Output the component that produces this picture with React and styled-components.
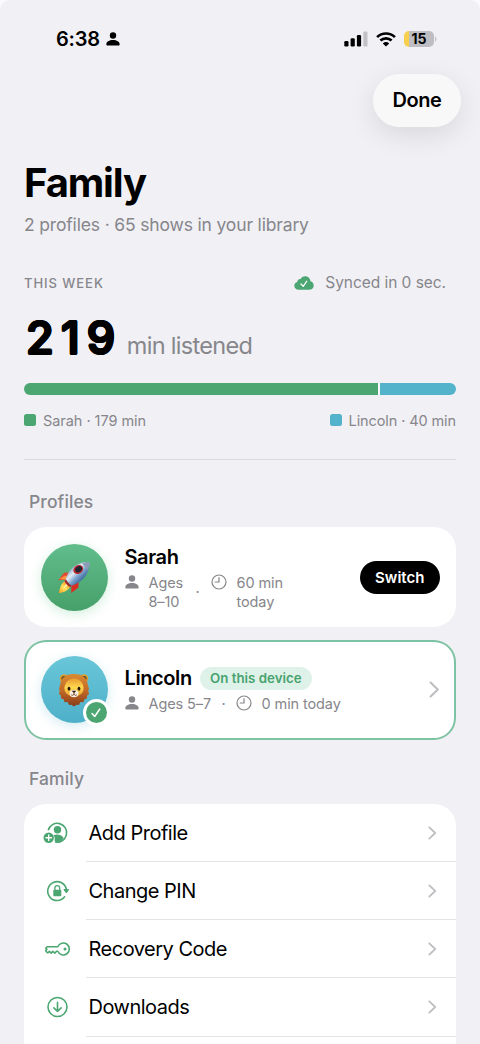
import React from "react";
import styled, { createGlobalStyle } from "styled-components";

const GREEN = "#4ba671";
const BLUE = "#53b3cb";
const GRAY = "#86868b";

const Global = createGlobalStyle`
  * { box-sizing: border-box; }
  html, body { margin: 0; height: 1044px; overflow: hidden; background: #fafafc; }
  body { font-family: Inter, "Liberation Sans", sans-serif; color: #000; }
  svg { display: block; flex: none; }
`;

const Screen = styled.main`
  width: 480px;
  height: 1044px;
  overflow: hidden;
  display: flex;
  flex-direction: column;
  background: #f1f0f5;
  border-radius: 10px 10px 0 0;
`;

const Label = styled.span`
  font-size: ${(p) => p.$size}px;
  line-height: ${(p) => p.$line}px;
  font-weight: ${(p) => p.$weight || 400};
  letter-spacing: ${(p) => p.$track || 0}px;
  color: ${(p) => p.$color || "#000"};
  white-space: nowrap;
`;

const StatusBar = styled.header`
  flex: none;
  height: 74px;
  padding: 4px 42px 0 56px;
  display: flex;
  align-items: center;
  justify-content: space-between;
`;

const Group = styled.div`
  display: flex;
  align-items: center;
  gap: ${(p) => p.$gap}px;
`;

const Battery = styled.div`
  width: 30px;
  height: 16px;
  border-radius: 5px;
  display: flex;
  align-items: center;
  justify-content: center;
  background: linear-gradient(90deg, #f8d04e 5px, #bebdc2 5px);
`;

const Toolbar = styled.div`
  flex: none;
  display: flex;
  justify-content: flex-end;
  height: 53px;
  padding-right: 19px;
`;

const DoneButton = styled.button`
  width: 88px;
  height: 53px;
  padding: 0;
  border: 0;
  border-radius: 27px;
  background: #f8f8f9;
  color: #000;
  font: 600 20px/53px Inter, sans-serif;
  letter-spacing: -0.4px;
  box-shadow: 0 8px 28px rgba(0, 0, 0, 0.1);
`;

const Content = styled.div`
  flex: none;
  padding: 0 24px;
  display: flex;
  flex-direction: column;
`;

const Title = styled.h1`
  margin: 31px 0 0;
  font-size: 40px;
  line-height: 50px;
  font-weight: 700;
  letter-spacing: -1.15px;
`;

const Row = styled.div`
  display: flex;
  align-items: center;
  justify-content: space-between;
  margin-top: ${(p) => p.$top || 0}px;
  padding-right: ${(p) => p.$end || 0}px;
`;

const Total = styled.div`
  display: flex;
  align-items: baseline;
  gap: 4.5px;
  height: 59px;
  margin-top: 14px;
`;

/* The ring of shadows thickens the strokes and rounds their ends. */
const RoundedNumber = styled.span`
  padding-left: 2px;
  font-size: 45px;
  line-height: 57px;
  font-weight: 500;
  letter-spacing: 7.2px;
  text-shadow: 1.2px 0 #000, -1.2px 0 #000, 0 1.2px #000, 0 -1.2px #000,
    0.85px 0.85px #000, -0.85px 0.85px #000, 0.85px -0.85px #000, -0.85px -0.85px #000;
`;

const Bar = styled.div`
  display: flex;
  gap: 2px;
  height: 12px;
  margin-top: 14.5px;
  border-radius: 6px;
  overflow: hidden;
  background: #fafafc;
`;

const Segment = styled.div`
  flex: ${(p) => p.$share} 0 0;
  background: ${(p) => p.$color};
`;

const Swatch = styled.i`
  width: 12px;
  height: 12px;
  border-radius: 2.5px;
  background: ${(p) => p.$color};
`;

const Divider = styled.hr`
  width: 100%;
  height: 1px;
  margin: 29.5px 0 0;
  border: 0;
  background: #d9d8dd;
`;

const SectionTitle = styled.h2`
  margin: ${(p) => p.$top}px 0 0 5px;
  font-size: 17.5px;
  line-height: 24px;
  font-weight: 500;
  letter-spacing: 0.12px;
  color: ${GRAY};
`;

const ProfileCard = styled.article`
  height: 100px;
  margin-top: ${(p) => p.$top}px;
  padding: 0 16px 0 16.5px;
  border-radius: 22px;
  display: flex;
  align-items: center;
  background: #fff;
  box-shadow: ${(p) => (p.$active ? "inset 0 0 0 2px #7ec2a4" : "none")};
`;

const Avatar = styled.div`
  position: relative;
  flex: none;
  width: 67px;
  height: 67px;
  margin-right: 17px;
  border-radius: 50%;
  display: grid;
  place-items: center;
  background: ${(p) => (p.$blue ? "linear-gradient(#69c6d8, #4eb0c9)" : "linear-gradient(#62bd8d, #45a069)")};
  box-shadow: 0 3px 12px ${(p) => (p.$blue ? "rgba(83,179,203,.25)" : "rgba(75,190,120,.25)")};
`;

const CheckBadge = styled.div`
  position: absolute;
  right: -2px;
  bottom: -3px;
  width: 27px;
  height: 27px;
  border: 3.5px solid #fff;
  border-radius: 50%;
  display: grid;
  place-items: center;
  background: ${GREEN};
`;

const Details = styled.div`
  flex: 1;
  display: flex;
  flex-direction: column;
`;

const Meta = styled.div`
  display: flex;
  align-items: flex-start;
  font-size: 14.5px;
  line-height: 19px;
  letter-spacing: -0.1px;
  color: ${GRAY};
  margin-top: ${(p) => p.$top}px;
`;

const Slot = styled.span`
  width: ${(p) => p.$width}px;
  flex: none;
  padding-top: ${(p) => p.$top || 0}px;
  white-space: nowrap;
`;

const DevicePill = styled.span`
  height: 23px;
  width: 112px;
  border-radius: 12px;
  text-align: center;
  background: #dff2e9;
  color: #48a36f;
  font-size: 13.3px;
  line-height: 23px;
  font-weight: 600;
`;

const SwitchButton = styled.button`
  width: 80.5px;
  height: 33px;
  padding: 0;
  border: 0;
  border-radius: 17px;
  background: #000;
  color: #fff;
  font: 600 15px/33px Inter, sans-serif;
`;

const Menu = styled.nav`
  height: 260px;
  margin-top: 13px;
  border-radius: 22px 22px 0 0;
  background: #fff;
`;

const MenuItem = styled.div`
  height: 58.15px;
  display: flex;
  align-items: stretch;
`;

const MenuIcon = styled.div`
  width: 62px;
  padding-left: 18px;
  display: flex;
  align-items: center;
`;

const MenuLabel = styled.div`
  flex: 1;
  padding: 1px 19px 0 2.5px;
  display: flex;
  align-items: center;
  justify-content: space-between;
  border-bottom: 1px solid #e4e4e7;
`;

const Person = ({ size = 14, color = GRAY }) => (
  <svg width={size} height={size} viewBox="0 0 14 14" fill={color}>
    <circle cx="7" cy="3.5" r="3.2" />
    <path d="M.3 12.3C.3 9.6 3.3 7.9 7 7.9s6.700 1.700 6.700 4.400c0 .9-.5 1.300-1.300 1.300H1.600c-.8 0-1.300-.4-1.300-1.300Z" />
  </svg>
);

const Clock = () => (
  <svg width="16" height="16" viewBox="0 0 16 16" fill="none" stroke={GRAY} strokeWidth="1.2" strokeLinecap="round">
    <circle cx="8" cy="8" r="7" />
    <path d="M8 3.700V8H4.200" />
  </svg>
);

const Chevron = ({ large }) => (
  <svg width={large ? 11 : 9} height={large ? 17 : 14} viewBox="0 0 9 14" fill="none" stroke="#bfbfc3" strokeWidth="1.800" strokeLinecap="round" strokeLinejoin="round">
    <path d="m1.300 1.300 5.900 5.700-5.900 5.700" />
  </svg>
);

const Signal = () => (
  <svg width="24" height="16" viewBox="0 0 24 16">
    <rect x=".3" y="10" width="4.200" height="5.500" rx="1.200" />
    <rect x="6.600" y="7.300" width="4.200" height="8.200" rx="1.200" />
    <rect x="12.900" y="4" width="4.200" height="11.500" rx="1.200" />
    <rect x="19.300" y=".5" width="4.200" height="15" rx="1.200" fill="#c2c1c6" />
  </svg>
);

const Wifi = () => (
  <svg width="20" height="15" viewBox="0 0 20 15" fill="none" stroke="#000" strokeWidth="2.700">
    <path d="M1.100 5.100a12.800 12.800 0 0 1 17.800 0" />
    <path d="M4.400 8.600a8.100 8.100 0 0 1 11.200 0" />
    <path d="m10 14.600-3.200-3.200a4.600 4.600 0 0 1 6.400 0Z" fill="#000" stroke="none" />
  </svg>
);

const CloudCheck = () => (
  <svg width="20" height="14" viewBox="0 0 20 14">
    <path d="M4.800 13.800C2 13.800.3 12.100.3 9.800c0-2 1.200-3.400 3-3.800.1-2 1.500-3.200 3.300-3C7.500 1.200 9.100.2 11.100.2c3 0 5.200 2.200 5.300 5 2 .5 3.300 2.100 3.300 4.200 0 2.600-2 4.400-4.700 4.400Z" fill={GREEN} />
    <path d="m7 8 2.200 2.400 3.600-5.200" fill="none" stroke="#fff" strokeWidth="1.200" strokeLinecap="round" strokeLinejoin="round" />
  </svg>
);

const Check = () => (
  <svg width="12" height="12" viewBox="0 0 12 12" fill="none" stroke="#fff" strokeWidth="1.500" strokeLinecap="round" strokeLinejoin="round">
    <path d="m2 6.500 2.700 3L9.800 2" />
  </svg>
);

const Rocket = () => (
  <svg width="34" height="33" viewBox="0 0 35 35">
    <defs>
      <linearGradient id="hull" x1="12" y1="10" x2="25" y2="23" gradientUnits="userSpaceOnUse">
        <stop stopColor="#8aa6c4" /><stop offset=".3" stopColor="#e4ecf5" /><stop offset=".6" stopColor="#7ea3cd" /><stop offset="1" stopColor="#2c5d95" />
      </linearGradient>
      <linearGradient id="flame" x1="11" y1="22" x2="2" y2="33" gradientUnits="userSpaceOnUse">
        <stop stopColor="#fa7c20" /><stop offset=".5" stopColor="#ffe25a" /><stop offset="1" stopColor="#f8a92b" />
      </linearGradient>
    </defs>
    <path d="M14 12 7 12.500.800 20.500 10 20Z" fill="#e3482f" />
    <path d="m2 19 6-3.500 3 1.500-2 3Z" fill="#fa9140" />
    <path d="m22.500 21-.5 7.500-7.500 5.500.3-10Z" fill="#d92e24" />
    <path d="M8.500 21C4.500 23 2.800 27 1.500 34 7.500 33.500 12 31 14 26Z" fill="url(#flame)" />
    <path d="M9.500 23.500 5 30.500l6-4.500Z" fill="#fff4a5" />
    <path d="M8.500 20.500C11 9 19 2 31.500 1 34 .700 34.500 1.500 34 4 32.500 15 26 23 14 26.500Z" fill="url(#hull)" />
    <path d="M26 2.300C28.500 1.400 31 .8 33.500 1.200c1 2-.5 6-1.500 8Z" fill="#8b9db6" />
    <path d="M9 19.500c2 3 3.500 5 6 6.500l-1.500 1.500C10.500 26.500 8.500 24 7.500 21Z" fill="#9b2c30" />
    <ellipse cx="22" cy="9" rx="5.500" ry="4.500" transform="rotate(-35 22 9)" fill="#b92a2e" />
    <ellipse cx="22.500" cy="9" rx="3.800" ry="3" transform="rotate(-35 22 9)" fill="#202531" />
  </svg>
);

const Lion = () => (
  <svg width="32" height="34" viewBox="0 0 32 34">
    <defs>
      <linearGradient id="mane" x1="0" y1="0" x2="0" y2="1">
        <stop stopColor="#d88b31" /><stop offset=".5" stopColor="#c46a28" /><stop offset="1" stopColor="#873c19" />
      </linearGradient>
      <linearGradient id="face" x1="0" y1="0" x2="0" y2="1">
        <stop stopColor="#e99c32" /><stop offset=".5" stopColor="#ffd84e" /><stop offset="1" stopColor="#e89d2d" />
      </linearGradient>
    </defs>
    <circle cx="6" cy="5.500" r="4.300" fill="#dc9e32" /><circle cx="26" cy="5.500" r="4.300" fill="#dc9e32" />
    <circle cx="6" cy="5.500" r="2.600" fill="#574928" /><circle cx="26" cy="5.500" r="2.600" fill="#574928" />
    <path d="M16 1C8 .5 3 5 2.300 11L1 16l.8 2L.9 21l2 1.500.2 3 2.500.7 1 3 3-.1 1.500 3 2.300-.4L16 33.500l2.600-1.800 2.300.4 1.500-3 3 .1 1-3 2.500-.7.2-3 2-1.500-.9-3 .8-2-1.300-5C29 5 24 .5 16 1Z" fill="url(#mane)" />
    <path d="M16 5.500C10.500 5.500 7 9.500 6.500 14.500c-.2 4.500 2 8.300 9.500 9 7.500-.7 9.700-4.500 9.500-9C25 9.500 21.500 5.500 16 5.500Z" fill="url(#face)" />
    <ellipse cx="16" cy="20.500" rx="4.500" ry="3.700" fill="#f8eee0" />
    <ellipse cx="11" cy="15.700" rx="1.400" ry="1.900" fill="#25160c" /><ellipse cx="21" cy="15.700" rx="1.400" ry="1.900" fill="#25160c" />
    <path d="M13.700 17.700h4.600L16 20.300Z" fill="#37190e" />
    <path d="M13.200 21.800c1.300 1 2.200.5 2.800-.6.6 1.100 1.500 1.600 2.800.6M16 20v1.500" fill="none" stroke="#5d321d" strokeWidth=".8" />
  </svg>
);

const AddProfileIcon = () => (
  <svg width="29" height="24" viewBox="0 0 29 24">
    <path d="M6.200 9.300a9.400 9.400 0 1 1 7 11.600" fill="none" stroke={GREEN} strokeWidth="1.600" />
    <circle cx="15.500" cy="8.800" r="3.700" fill={GREEN} />
    <path d="M12.700 20.500v-3.800c-.2-1.200-.7-2-1.200-2.400 3-1.400 8.200-1 10.200 2.900-2.300 3-5.500 4.200-9 3.300Z" fill={GREEN} />
    <circle cx="6.700" cy="16.800" r="5.200" fill={GREEN} />
    <path d="M3.900 16.800h5.600M6.700 14v5.600" stroke="#fff" strokeWidth="1.400" strokeLinecap="round" />
  </svg>
);

const ChangePinIcon = () => (
  <svg width="29" height="24" viewBox="0 0 29 24">
    <path d="M22.600 17.800a9.400 9.400 0 1 1 1.800-7.300" fill="none" stroke={GREEN} strokeWidth="1.600" strokeLinecap="round" />
    <path d="M21.900 10.600h4.700L24.300 13.900Z" fill={GREEN} stroke={GREEN} strokeLinejoin="round" />
    <rect x="11.300" y="10.800" width="8" height="6.500" rx="1" fill={GREEN} />
    <path d="M12.900 11.300V9a2.400 2.400 0 0 1 4.800 0v2.300" fill="none" stroke={GREEN} strokeWidth="1.300" />
  </svg>
);

const KeyIcon = () => (
  <svg width="29" height="24" viewBox="0 0 29 24" fill="none" stroke={GREEN} strokeWidth="1.600" strokeLinejoin="round">
    <path d="M15.800 9.700A6 6 0 1 1 15.800 14.300H14.500l-1.700 1.900-1.900-1.900-1.600 1.800-1.900-1.800-1.400 1.400H5.400L3.700 13.700l1.200-1.300L3.700 11.200 5.200 9.700Z" />
    <circle cx="23" cy="12" r="1.500" fill={GREEN} stroke="none" />
  </svg>
);

const DownloadIcon = () => (
  <svg width="29" height="24" viewBox="0 0 29 24" fill="none" stroke={GREEN} strokeWidth="1.600" strokeLinecap="round" strokeLinejoin="round">
    <circle cx="15.500" cy="12" r="9.500" />
    <path d="M15.500 7.300v9M11.900 12.900l3.600 3.600 3.600-3.600" />
  </svg>
);

const menu = [
  { label: "Add Profile", Icon: AddProfileIcon },
  { label: "Change PIN", Icon: ChangePinIcon },
  { label: "Recovery Code", Icon: KeyIcon },
  { label: "Downloads", Icon: DownloadIcon },
];

export default function App() {
  return (
    <>
      <Global />
      <Screen>
        <StatusBar>
          <Group $gap={6}>
            <Label $size={20} $line={24} $weight={600} $track={-0.2}>6:38</Label>
            <Person color="#000" />
          </Group>
          <Group $gap={8}>
            <Signal />
            <Wifi />
            <Group $gap={1}>
              <Battery><Label $size={14} $line={16} $weight={700}>15</Label></Battery>
              <svg width="3" height="6" viewBox="0 0 3 6"><path d="M0 0q3 3 0 6Z" fill="#c2c1c6" /></svg>
            </Group>
          </Group>
        </StatusBar>
        <Toolbar><DoneButton>Done</DoneButton></Toolbar>
        <Content>
          <Title>Family</Title>
          <Row $top={5}>
            <Label $size={17.5} $line={24} $track={-0.16} $color={GRAY}>2 profiles · 65 shows in your library</Label>
          </Row>
          <Row $top={34} $end={10}>
            <Label $size={13} $line={24} $weight={500} $track={0.95} $color={GRAY}>THIS WEEK</Label>
            <Group $gap={11}>
              <CloudCheck />
              <Label $size={15.5} $line={24} $track={-0.05} $color={GRAY}>Synced in 0 sec.</Label>
            </Group>
          </Row>
          <Total>
            <RoundedNumber>219</RoundedNumber>
            <Label $size={23.5} $line={30} $track={-0.7} $color={GRAY}>min listened</Label>
          </Total>
          <Bar>
            <Segment $share={353.5} $color={GREEN} />
            <Segment $share={76.5} $color={BLUE} />
          </Bar>
          <Row $top={16}>
            <Group $gap={7}>
              <Swatch $color={GREEN} />
              <Label $size={14.5} $line={19} $track={-0.05} $color={GRAY}>Sarah · 179 min</Label>
            </Group>
            <Group $gap={7}>
              <Swatch $color={BLUE} />
              <Label $size={14.5} $line={19} $track={-0.1} $color={GRAY}>Lincoln · 40 min</Label>
            </Group>
          </Row>
          <Divider />
          <SectionTitle $top={30}>Profiles</SectionTitle>
          <ProfileCard $top={13}>
            <Avatar><Rocket /></Avatar>
            <Details>
              <Label $size={20} $line={26} $weight={600} $track={-0.4}>Sarah</Label>
              <Meta $top={3}>
                <Slot $width={24} $top={2}><Person /></Slot>
                <Slot $width={47}>Ages<br />8–10</Slot>
                <Slot $width={15} $top={9}>·</Slot>
                <Slot $width={26} $top={1}><Clock /></Slot>
                <Slot $width={60}>60 min<br />today</Slot>
              </Meta>
            </Details>
            <SwitchButton>Switch</SwitchButton>
          </ProfileCard>
          <ProfileCard $top={12.5} $active>
            <Avatar $blue><Lion /><CheckBadge><Check /></CheckBadge></Avatar>
            <Details>
              <Group $gap={8}>
                <Label $size={20} $line={24} $weight={600} $track={-0.4}>Lincoln</Label>
                <DevicePill>On this device</DevicePill>
              </Group>
              <Meta $top={4}>
                <Slot $width={24} $top={2}><Person /></Slot>
                <Slot $width={73}>Ages 5–7</Slot>
                <Slot $width={14}>·</Slot>
                <Slot $width={26} $top={1}><Clock /></Slot>
                <Slot $width={90}>0 min today</Slot>
              </Meta>
            </Details>
            <Chevron large />
          </ProfileCard>
          <SectionTitle $top={27.5}>Family</SectionTitle>
          <Menu>
            {menu.map(({ label, Icon }) => (
              <MenuItem key={label}>
                <MenuIcon><Icon /></MenuIcon>
                <MenuLabel>
                  <Label $size={20} $line={26} $track={-0.5}>{label}</Label>
                  <Chevron />
                </MenuLabel>
              </MenuItem>
            ))}
          </Menu>
        </Content>
      </Screen>
    </>
  );
}
